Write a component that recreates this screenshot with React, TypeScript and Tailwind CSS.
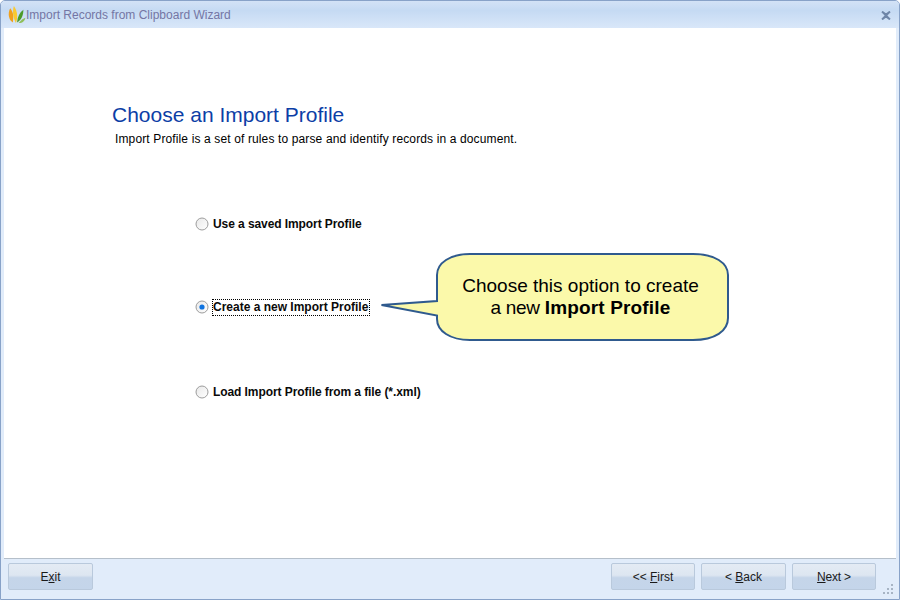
import React from "react";

const sans = "font-['Liberation_Sans',Arial,sans-serif]";

function Radio({ checked }: { checked?: boolean }) {
  return (
    <svg width="14" height="14" viewBox="0 0 14 14" className="shrink-0">
      <defs>
        <linearGradient id={checked ? "rc" : "ru"} x1="0" y1="0" x2="1" y2="1">
          <stop offset="0" stopColor="#e8e8e8" />
          <stop offset="1" stopColor="#ffffff" />
        </linearGradient>
      </defs>
      <circle cx="7" cy="7" r="6" fill={`url(#${checked ? "rc" : "ru"})`} stroke="#9c9c9c" strokeWidth="1" />
      {checked && <circle cx="7" cy="7" r="2.6" fill="#0f73e0" />}
    </svg>
  );
}

function Button({ className, children }: { className: string; children: React.ReactNode }) {
  return (
    <div
      className={`h-[27px] flex items-center justify-center rounded-[2px] border border-[#b9c9dc] bg-[linear-gradient(to_bottom,#e4ebf4_0%,#dde6f1_45%,#c5d5e9_55%,#c4d5ea_100%)] text-[12px] text-[#1a1a1a] ${className}`}
    >
      {children}
    </div>
  );
}

function Callout() {
  return (
    <div className="absolute left-[380px] top-[253px] w-[350px] h-[90px]">
      <svg width="350" height="90" viewBox="0 0 350 90" className="absolute inset-0">
        <path
          d="M57 22 C57 10 70 1 90 1 L313 1 C335 1 348 10 348 22 L348 65 C348 78 335 87 313 87 L90 87 C70 87 57 78 57 66 L57 62.5 L1.5 52 L57 48 Z"
          fill="#fbf9aa"
          stroke="#2f5a8e"
          strokeWidth="2"
          strokeLinejoin="miter"
        />
      </svg>
      <div className="absolute left-[57px] top-[22px] w-[287px] text-center text-[19px] leading-[22px] text-black">
        <div>Choose this option to create</div>
        <div>
          <span className="tracking-[-0.3px]">a new </span>
          <b className="tracking-[0.15px]">Import Profile</b>
        </div>
      </div>
    </div>
  );
}

export default function App() {
  return (
    <div className={`relative w-[900px] h-[600px] overflow-hidden flex flex-col rounded-t-[5px] border border-[#88a2c8] bg-[#e1ecfa] ${sans}`}>
      <div className="h-[27px] shrink-0 flex items-center justify-between pl-[6px] pr-[8px] bg-[linear-gradient(to_bottom,#d3e2f6_0%,#c5daf3_35%,#d9e7f9_100%)]">
        <div className="flex items-center">
          <svg width="19" height="19" viewBox="0 0 18 18" className="shrink-0">
            <path d="M3 3 C0.5 8 1.5 14 5.5 16.5 C6.5 11 6 6.5 3 3Z" fill="#f0a01c" />
            <path d="M6.5 1 C4.8 7 6 13 8.5 17 C10.5 11.5 10 6 6.5 1Z" fill="#f9c930" />
            <path d="M9.5 16.5 C10 11 12 7 15.5 4.5 C15.5 10 13.5 14.5 9.5 16.5Z" fill="#4c9a2a" />
            <path d="M11 17 C13 14.5 15.5 12.5 17.5 12 C17 15 14.5 17.2 11 17Z" fill="#8fbf5a" />
          </svg>
          <span className="text-[12px] mt-[1px] text-[#7476a4]">Import Records from Clipboard Wizard</span>
        </div>
        <svg width="10" height="9" viewBox="0 0 10 9" className="mt-[1px]">
          <path d="M1 0.5 L5 3.5 L9 0.5 M1 8.5 L5 5.5 L9 8.5 M1 0.5 L9 8.5 M9 0.5 L1 8.5" stroke="#6f86a8" strokeWidth="1.8" fill="none" />
        </svg>
      </div>

      <div className="flex-1 mx-[3px] bg-white border-b border-[#b5bfca] flex flex-col pt-[75px] pl-[108px]">
        <h1 className="text-[21px] leading-[24px] text-[#0c3ea6]">Choose an Import Profile</h1>
        <p className="ml-[3px] mt-[4px] text-[12px] leading-[16px] tracking-[0.13px] text-black">
          Import Profile is a set of rules to parse and identify records in a document.
        </p>
        <div className="ml-[83px] mt-[69px] flex flex-col text-[12px] font-bold tracking-[-0.08px] text-[#0a0a0a]">
          <div className="h-[16px] flex items-center gap-[4px]">
            <Radio />
            <span>Use a saved Import Profile</span>
          </div>
          <div className="h-[16px] mt-[67px] flex items-center gap-[3px]">
            <Radio checked />
            <span className="w-[158px] h-[17px] border border-dotted border-black leading-[15px] tracking-[0px] whitespace-nowrap">
              Create a new Import Profile
            </span>
          </div>
          <div className="h-[16px] mt-[69px] flex items-center gap-[4px]">
            <Radio />
            <span>Load Import Profile from a file (*.xml)</span>
          </div>
        </div>
      </div>

      <div className="h-[40px] shrink-0 flex items-start justify-between pt-[4px] pl-[7px] pr-[23px]">
        <Button className="w-[85px]">
          <span>
            E<u>x</u>it
          </span>
        </Button>
        <div className="flex gap-[6px]">
          <Button className="w-[84px]">
            <span>
              &lt;&lt; <u>F</u>irst
            </span>
          </Button>
          <Button className="w-[85px]">
            <span>
              &lt; <u>B</u>ack
            </span>
          </Button>
          <Button className="w-[84px]">
            <span className="tracking-[-0.2px]">
              <u>N</u>ext &gt;
            </span>
          </Button>
        </div>
      </div>
      <svg width="12" height="12" viewBox="0 0 12 12" className="absolute right-[4px] bottom-[4px]">
        <g fill="#a7b4c4">
          <rect x="8" y="1" width="2" height="2" />
          <rect x="4" y="5" width="2" height="2" />
          <rect x="8" y="5" width="2" height="2" />
          <rect x="0" y="9" width="2" height="2" />
          <rect x="4" y="9" width="2" height="2" />
          <rect x="8" y="9" width="2" height="2" />
        </g>
      </svg>
      <div className="absolute -left-px -top-px">
        <Callout />
      </div>
    </div>
  );
}
